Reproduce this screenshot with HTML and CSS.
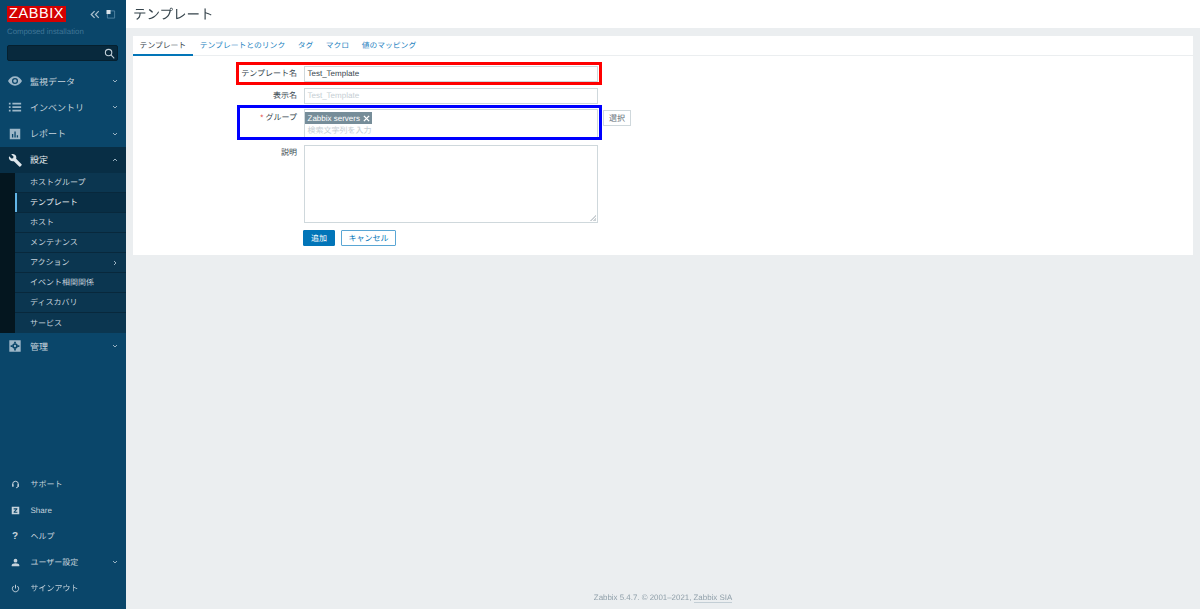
FILE: index.html
```html
<!DOCTYPE html>
<html lang="ja">
<head>
<meta charset="utf-8">
<title>テンプレート</title>
<link rel="stylesheet" href="styles.css">
</head>
<body>
<aside class="sidebar">
  <div class="brand">
    <span class="logo">ZABBIX</span>
    <span class="brand-tools">
      <svg class="tool" viewBox="0 0 12 10"><path d="M5.5 1 1.5 5l4 4M10.5 1l-4 4 4 4"/></svg>
      <svg class="tool" viewBox="0 0 10 10"><path class="thin" d="M1 1h8v8H1z"/><path class="fill" d="M0 0h4.500v4.500H0z"/></svg>
    </span>
  </div>
  <div class="server">Composed installation</div>
  <div class="search">
    <svg class="search-icon" viewBox="0 0 12 12"><circle cx="5" cy="5" r="3.5"/><path d="m7.6 7.6 3.6 3.6"/></svg>
  </div>
  <nav class="menu">
    <a class="item">
      <svg class="ico" viewBox="0 0 16 16"><path class="solid" fill-rule="evenodd" d="M8 2.6C4.4 2.6 1.4 5 0 8c1.4 3 4.4 5.4 8 5.4s6.6-2.4 8-5.4c-1.4-3-4.400-5.400-8-5.400zM8 11.500a3.500 3.500 0 1 1 0-7 3.500 3.500 0 0 1 0 7zM8 6a2 2 0 1 0 0 4 2 2 0 0 0 0-4z"/></svg>
      <span class="label">監視データ</span>
      <svg class="chev" viewBox="0 0 6 4"><path d="m1 1 2 2 2-2"/></svg>
    </a>
    <a class="item">
      <svg class="ico" viewBox="0 0 16 16"><path class="solid" d="M1 3h2v2H1zM5 3h10v2H5zM1 7h2v2H1zM5 7h10v2H5zM1 11h2v2H1zM5 11h10v2H5z"/></svg>
      <span class="label">インベントリ</span>
      <svg class="chev" viewBox="0 0 6 4"><path d="m1 1 2 2 2-2"/></svg>
    </a>
    <a class="item">
      <svg class="ico" viewBox="0 0 16 16"><path class="solid" fill-rule="evenodd" d="M2 2h12v12H2zM4.500 8v4h1.500V8zM7.300 5v7h1.500V5zM10 9.500V12h1.500V9.500z"/></svg>
      <span class="label">レポート</span>
      <svg class="chev" viewBox="0 0 6 4"><path d="m1 1 2 2 2-2"/></svg>
    </a>
    <a class="item open">
      <svg class="ico" viewBox="0 0 16 16"><path class="solid" d="M15.500 12.800 9.300 6.700c.5-1.500.2-3.200-1-4.400C7 1 5.200.7 3.700 1.300l2.600 2.600-.4 2-2 .4L1.300 3.700C.7 5.200 1 7 2.300 8.300c1.200 1.200 2.900 1.500 4.400 1l6.100 6.200c.4.400 1 .4 1.300 0l1.400-1.400c.4-.4.4-1 0-1.300z"/></svg>
      <span class="label">設定</span>
      <svg class="chev" viewBox="0 0 6 4"><path d="m1 3 2-2 2 2"/></svg>
    </a>
    <div class="submenu">
      <a class="sub">ホストグループ</a>
      <a class="sub current">テンプレート</a>
      <a class="sub">ホスト</a>
      <a class="sub">メンテナンス</a>
      <a class="sub">アクション<svg class="chev side" viewBox="0 0 4 6"><path d="m1 1 2 2-2 2"/></svg></a>
      <a class="sub">イベント相関関係</a>
      <a class="sub">ディスカバリ</a>
      <a class="sub">サービス</a>
    </div>
    <a class="item">
      <svg class="ico" viewBox="0 0 16 16"><path class="solid" fill-rule="evenodd" d="M1.500 1.500h13v13h-13zM8 4.800a3.200 3.200 0 1 0 0 6.400 3.200 3.200 0 0 0 0-6.400zM8 6.700a1.300 1.300 0 1 1 0 2.600 1.300 1.300 0 0 1 0-2.600zM7 3h2v2H7zM7 11h2v2H7zM3 7h2v2H3zM11 7h2v2h-2z"/></svg>
      <span class="label">管理</span>
      <svg class="chev" viewBox="0 0 6 4"><path d="m1 1 2 2 2-2"/></svg>
    </a>
  </nav>
  <nav class="menu-bottom">
    <a class="item low">
      <svg class="ico small" viewBox="0 0 12 12"><path class="line" d="M2.200 7V5.500a3.800 3.800 0 0 1 7.600 0V7M9.800 7.500c0 1.800-1.200 2.800-3 2.800"/><path class="solid" d="M1.500 5.500h2v3.500h-2zM8.500 5.500h2v3.500h-2z"/></svg>
      <span class="label tiny">サポート</span>
    </a>
    <a class="item low">
      <svg class="ico small" viewBox="0 0 12 12"><path class="solid" fill-rule="evenodd" d="M1 1h10v10H1zM3.500 3v1.500h3L3.500 7.800V9h5V7.500H5.500l3-3.300V3z"/></svg>
      <span class="label tiny latin">Share</span>
    </a>
    <a class="item low">
      <span class="qmark">?</span>
      <span class="label tiny">ヘルプ</span>
    </a>
    <a class="item low">
      <svg class="ico small" viewBox="0 0 12 12"><circle class="solid" cx="6" cy="3.500" r="2.500"/><path class="solid" d="M1 11V9.500C1 8 3.500 7 6 7s5 1 5 2.500V11z"/></svg>
      <span class="label tiny">ユーザー設定</span>
      <svg class="chev" viewBox="0 0 6 4"><path d="m1 1 2 2 2-2"/></svg>
    </a>
    <a class="item low">
      <svg class="ico small" viewBox="0 0 12 12"><path class="line" d="M6 1v5M3.500 2.800a4.200 4.200 0 1 0 5 0"/></svg>
      <span class="label tiny">サインアウト</span>
    </a>
  </nav>
</aside>

<div class="page">
  <header class="topbar"><h1>テンプレート</h1></header>
  <main class="content">
    <section class="card">
      <ul class="tabs">
        <li class="tab active">テンプレート</li>
        <li class="tab">テンプレートとのリンク</li>
        <li class="tab">タグ</li>
        <li class="tab">マクロ</li>
        <li class="tab">値のマッピング</li>
      </ul>
      <form class="form">
        <div class="row row-name">
          <span class="field-label"><b class="req">*</b> テンプレート名</span>
          <div class="control"><div class="input">Test_Template</div></div>
        </div>
        <div class="row row-display">
          <span class="field-label">表示名</span>
          <div class="control"><div class="input placeholder">Test_Template</div></div>
        </div>
        <div class="row row-group">
          <span class="field-label"><b class="req">*</b> グループ</span>
          <div class="control">
            <div class="multi">
              <span class="chip">Zabbix servers
                <svg class="chip-x" viewBox="0 0 8 8"><path d="m1 1 6 6M7 1 1 7"/></svg>
              </span>
              <span class="multi-hint">検索文字列を入力</span>
            </div>
            <span class="select-btn">選択</span>
          </div>
        </div>
        <div class="row row-desc">
          <span class="field-label">説明</span>
          <div class="control">
            <div class="textarea">
              <svg class="grip" viewBox="0 0 8 8"><path d="M7 1v1L2 7H1zM7 4v1L5 7H4zM7 6v1H6z"/></svg>
            </div>
          </div>
        </div>
        <div class="actions">
          <span class="btn primary">追加</span>
          <span class="btn outline">キャンセル</span>
        </div>
      </form>
      <div class="mark mark-red"></div>
      <div class="mark mark-blue"></div>
    </section>
  </main>
  <footer class="footer">Zabbix 5.4.7. © 2001–2021, <span class="footer-link">Zabbix SIA</span></footer>
</div>
</body>
</html>
```
FILE: styles.css
```css
* { box-sizing: border-box; }
html, body { height: 100%; }
body {
  margin: 0;
  display: flex;
  height: 609px;
  overflow: hidden;
  background: #ebeef0;
  font-family: "Liberation Sans", "Noto Sans CJK JP", sans-serif;
  font-size: 8px;
  color: #36444c;
  text-rendering: geometricPrecision;
  filter: blur(.3px);
}

/* sidebar */
.sidebar {
  width: 126px;
  flex: none;
  display: flex;
  flex-direction: column;
  background: #0a466a;
  color: #d5dde3;
}
.brand {
  display: flex;
  align-items: center;
  justify-content: space-between;
  padding: 6px 10px 0 7px;
}
.logo {
  width: 59px;
  height: 16px;
  background: #d40000;
  color: #fff;
  font-size: 14.5px;
  line-height: 17px;
  letter-spacing: .55px;
  text-align: center;
}
.brand-tools { display: flex; gap: 6px; align-items: center; }
.tool { width: 10px; height: 9px; fill: none; stroke: #a9bfcd; stroke-width: 1.5; }
.tool .thin { stroke: #5d8dab; stroke-width: .9; }
.tool .fill { fill: #dbe4ea; stroke: none; }
.server {
  margin: 5px 0 0 7px;
  height: 10px;
  line-height: 10px;
  font-size: 7.8px;
  color: #3f7596;
}
.search {
  margin: 8px 8px 0 7px;
  height: 16px;
  background: #08293d;
  border: 1px solid #05202f;
  border-radius: 2px;
  display: flex;
  align-items: center;
  justify-content: flex-end;
  padding-right: 2px;
}
.search-icon { width: 11px; height: 11px; fill: none; stroke: #c3d0d9; stroke-width: 1.2; }
.menu { margin-top: 7px; }
.menu-bottom { margin-top: auto; padding-bottom: 8px; }
.item {
  display: flex;
  align-items: center;
  height: 26.25px;
  padding: 0 8px;
  font-size: 9px;
}
.menu-bottom .item { height: 26px; }
.item.open { background: #082e45; color: #fff; }
.label { margin-left: 8px; flex: 1; font-size: 9px; color: #c6d3dc; }
.open .label { color: #e8eef2; }
.label.tiny { font-size: 8px; margin-left: 11px; }
.label.latin { font-family: "Liberation Sans", sans-serif; }
.ico { width: 14px; height: 14px; flex: none; }
.ico.small { width: 9px; height: 9px; margin-left: 2.5px; }
.solid { fill: #9db7c8; }
.open .solid { fill: #dfe7ec; }
.line { fill: none; stroke: #c6d3dc; stroke-width: 1.3; }
.low .solid { fill: #c6d3dc; }
.qmark {
  width: 9px;
  margin-left: 2.5px;
  text-align: center;
  font-size: 10px;
  font-weight: 700;
  color: #c6d3dc;
}
.chev { width: 6px; height: 4px; fill: none; stroke: #a9bfcd; stroke-width: .9; flex: none; }
.chev.side { width: 4px; height: 6px; margin: 0 1px 0 auto; }
.submenu {
  padding-left: 15px;
  background: #04161f;
}
.sub {
  display: flex;
  align-items: center;
  height: 20px;
  padding-left: 15px;
  padding-right: 8px;
  background: #0b3650;
  border-bottom: 1px solid #08283c;
  font-size: 8px;
  color: #c6d3dc;
}
.sub:last-child { border-bottom: 0; }
.sub.current {
  background: #082e45;
  color: #e8eef2;
  box-shadow: inset 2px 0 0 #62b6e8;
}

/* main */
.page {
  flex: 1;
  min-width: 0;
  display: flex;
  flex-direction: column;
}
.topbar {
  height: 28px;
  background: #fff;
  padding: 0 0 2px 7px;
  display: flex;
  align-items: center;
}
.topbar h1 {
  margin: 0;
  font-size: 13.5px;
  font-weight: 400;
  color: #36444c;
}
.content { padding: 8px 7px 0; flex: 1; }
.card {
  position: relative;
  height: 219px;
  background: #fff;
}
.tabs {
  list-style: none;
  display: flex;
  margin: 0;
  padding: 0;
  height: 20px;
  border-bottom: 1px solid #ebeef0;
}
.tab {
  height: 20px;
  padding: 0 5.9px 0 6.6px;
  line-height: 19px;
  color: #1f84bf;
  font-size: 7.8px;
}
.tab.active { color: #36444c; border-bottom: 2px solid #0275b8; padding-right: 7px; }
.form {
  display: flex;
  flex-direction: column;
  padding-top: 9.5px;
}
.row { display: grid; grid-template-columns: 164px 1fr; column-gap: 6.5px; }
.row-name { height: 22.5px; }
.row-display { height: 21px; }
.row-group { height: 36px; }
.row-desc { height: 85px; }
.field-label {
  text-align: right;
  line-height: 16px;
  font-size: 8px;
  color: #36444c;
}
.row-group .field-label { line-height: 18px; }
.req { color: #e33734; font-weight: 400; }
.control { display: flex; gap: 5px; align-items: flex-start; }
.input {
  width: 294.5px;
  height: 16px;
  padding: 0 3px;
  border: 1px solid #cfd8dc;
  line-height: 14px;
  font-size: 8px;
  color: #36444c;
  background: #fff;
}
.input.placeholder { color: #c5ced3; }
.multi {
  width: 294.5px;
  height: 30px;
  border: 1px solid #cfd8dc;
  padding: 2px .5px;
  display: flex;
  flex-direction: column;
  align-items: flex-start;
  background: #fff;
}
.chip {
  display: inline-flex;
  align-items: center;
  gap: 3px;
  height: 12px;
  padding: 0 2px 0 2.5px;
  background: #768d99;
  color: #fff;
  font-size: 8px;
  line-height: 11px;
  white-space: nowrap;
}
.chip-x { width: 7px; height: 7px; fill: none; stroke: #fff; stroke-width: 1.6; }
.multi-hint {
  margin: 1px 0 0 2.5px;
  line-height: 11px;
  color: #c5ced3;
  font-size: 8px;
}
.select-btn {
  width: 28px;
  height: 16px;
  margin-top: 1px;
  border: 1px solid #cfd8dc;
  text-align: center;
  line-height: 15px;
  color: #5b6a73;
  font-size: 8px;
}
.textarea {
  width: 294.5px;
  height: 78px;
  border: 1px solid #cfd8dc;
  display: flex;
  align-items: flex-end;
  justify-content: flex-end;
}
.grip { width: 8px; height: 8px; fill: #9aa6ad; }
.actions { display: flex; gap: 6px; padding-left: 170px; }
.btn {
  height: 16px;
  text-align: center;
  line-height: 15px;
  border: 1px solid #0275b8;
  border-radius: 1px;
  font-size: 8px;
}
.btn.primary { width: 32px; background: #0275b8; color: #fff; }
.btn.outline { width: 55px; color: #0275b8; background: #fff; border-color: #5aa6d4; }
.mark { position: absolute; pointer-events: none; }
.mark-red { left: 102.5px; top: 26px; width: 366px; height: 23px; border: 3.5px solid #f00; }
.mark-blue { left: 104px; top: 69px; width: 364.5px; height: 35px; border: 3.5px solid #00f; }
.footer {
  height: 22px;
  text-align: center;
  line-height: 22px;
  font-size: 7.9px;
  color: #8f9fa9;
}
.footer-link { border-bottom: 1px solid #c3ced5; }
```
